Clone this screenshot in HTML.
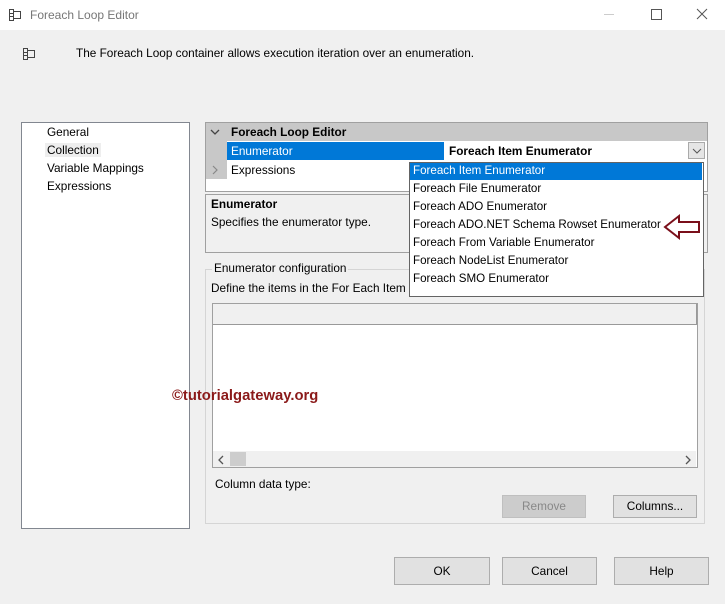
<!DOCTYPE html><html><head><style>
body{margin:0;width:725px;height:604px;background:#f0f0f0;font-family:"Liberation Sans",sans-serif;font-size:11.8px;color:#000;position:relative;overflow:hidden}
.a{position:absolute;white-space:nowrap}
.btn{position:absolute;background:#e1e1e1;border:1px solid #adadad;text-align:center;box-sizing:border-box}
.dd{font-size:11.6px}
</style></head><body>
<div class="a" style="left:0;top:0;width:725px;height:30px;background:#fff"></div>
<svg class="a" style="left:8px;top:8px" width="14" height="14"><path d="M1.5 1.5h4v11h-4zM5.5 3.5h7v7h-7M1.5 5.5h4M1.5 8.5h4" fill="none" stroke="#444"/></svg>
<div class="a" style="left:30px;top:8px;color:#777;font-size:12px">Foreach Loop Editor</div>
<div class="a" style="left:604px;top:14px;width:10px;height:1px;background:#ccc"></div>
<div class="a" style="left:651px;top:9px;width:9px;height:9px;border:1px solid #555"></div>
<svg class="a" style="left:696px;top:8px" width="12" height="12"><path d="M1 1L11 11M11 1L1 11" stroke="#555" stroke-width="1"/></svg>
<svg class="a" style="left:22px;top:47px" width="14" height="14"><path d="M1.5 1.5h4v11h-4zM5.5 3.5h7v7h-7M1.5 5.5h4M1.5 8.5h4" fill="none" stroke="#444"/></svg>
<div class="a" style="left:76px;top:46px">The Foreach Loop container allows execution iteration over an enumeration.</div>

<div class="a" style="left:21px;top:122px;width:167px;height:405px;background:#fff;border:1px solid #828790"></div>
<div class="a" style="left:47px;top:125px">General</div>
<div class="a" style="left:45px;top:143px;background:#eee;padding:0 2px">Collection</div>
<div class="a" style="left:47px;top:161px">Variable Mappings</div>
<div class="a" style="left:47px;top:179px">Expressions</div>

<div class="a" style="left:205px;top:122px;width:501px;height:68px;background:#fff;border:1px solid #a0a0a0"></div>
<div class="a" style="left:206px;top:123px;width:501px;height:18px;background:#c8c8c8"></div>
<div class="a" style="left:206px;top:141px;width:21px;height:38px;background:#c8c8c8"></div>
<svg class="a" style="left:210px;top:128px" width="10" height="8"><path d="M1 2L5 6L9 2" fill="none" stroke="#444" stroke-width="1.3"/></svg>
<div class="a" style="left:231px;top:125px;font-weight:bold">Foreach Loop Editor</div>
<div class="a" style="left:227px;top:142px;width:217px;height:18px;background:#0078d7"></div>
<div class="a" style="left:231px;top:144px;color:#fff">Enumerator</div>
<div class="a" style="left:449px;top:144px;font-weight:bold">Foreach Item Enumerator</div>
<div class="a" style="left:688px;top:142px;width:17px;height:17px;background:#e5e5e5;border:1px solid #aaa;box-sizing:border-box"></div>
<svg class="a" style="left:692px;top:148px" width="10" height="6"><path d="M1 1L5 5L9 1" fill="none" stroke="#555"/></svg>
<svg class="a" style="left:211px;top:165px" width="8" height="10"><path d="M2 1L6 5L2 9" fill="none" stroke="#888" stroke-width="1.2"/></svg>
<div class="a" style="left:231px;top:163px">Expressions</div>

<div class="a" style="left:205px;top:194px;width:501px;height:57px;border:1px solid #a0a0a0"></div>
<div class="a" style="left:211px;top:197px;font-weight:bold">Enumerator</div>
<div class="a" style="left:211px;top:215px">Specifies the enumerator type.</div>

<div class="a" style="left:205px;top:269px;width:498px;height:253px;border:1px solid #d5d5d5"></div>
<div class="a" style="left:212px;top:261px;background:#f0f0f0;padding:0 2px">Enumerator configuration</div>
<div class="a" style="left:211px;top:281px">Define the items in the For Each Item enumerator:</div>
<div class="a" style="left:212px;top:303px;width:484px;height:163px;background:#fff;border:1px solid #a0a0a0"></div>
<div class="a" style="left:213px;top:304px;width:483px;height:20px;background:#f0f0f0;border-bottom:1px solid #999;border-right:1px solid #999"></div>
<div class="a" style="left:213px;top:451px;width:483px;height:16px;background:#f0f0f0"></div>
<div class="a" style="left:230px;top:452px;width:16px;height:14px;background:#cdcdcd"></div>
<svg class="a" style="left:217px;top:455px" width="8" height="10"><path d="M6 1L2 5L6 9" fill="none" stroke="#555" stroke-width="1.3"/></svg>
<svg class="a" style="left:684px;top:455px" width="8" height="10"><path d="M2 1L6 5L2 9" fill="none" stroke="#555" stroke-width="1.3"/></svg>
<div class="a" style="left:172px;top:388px;color:#8b1a1a;font-weight:bold;font-size:14.8px">©tutorialgateway.org</div>
<div class="a" style="left:215px;top:477px">Column data type:</div>
<div class="btn" style="left:502px;top:495px;width:84px;height:23px;background:#ccc;border-color:#bfbfbf;color:#888;line-height:21px">Remove</div>
<div class="btn" style="left:613px;top:495px;width:84px;height:23px;line-height:21px">Columns...</div>

<div class="a" style="left:409px;top:162px;width:293px;height:133px;background:#fff;border:1px solid #646464"></div>
<div class="a" style="left:410px;top:163px;width:292px;height:17px;background:#0078d7"></div>
<div class="a dd" style="left:413px;top:164px;color:#fff">Foreach Item Enumerator</div>
<div class="a dd" style="left:413px;top:182px">Foreach File Enumerator</div>
<div class="a dd" style="left:413px;top:200px">Foreach ADO Enumerator</div>
<div class="a dd" style="left:413px;top:218px">Foreach ADO.NET Schema Rowset Enumerator</div>
<div class="a dd" style="left:413px;top:236px">Foreach From Variable Enumerator</div>
<div class="a dd" style="left:413px;top:254px">Foreach NodeList Enumerator</div>
<div class="a dd" style="left:413px;top:272px">Foreach SMO Enumerator</div>
<svg class="a" style="left:662px;top:213px" width="40" height="28"><path d="M3 14L17 3V9H37V19H17V25Z" fill="none" stroke="#7a0f1a" stroke-width="2"/></svg>

<div class="btn" style="left:394px;top:557px;width:96px;height:28px;line-height:26px">OK</div>
<div class="btn" style="left:502px;top:557px;width:95px;height:28px;line-height:26px">Cancel</div>
<div class="btn" style="left:614px;top:557px;width:95px;height:28px;line-height:26px">Help</div>
</body></html>
